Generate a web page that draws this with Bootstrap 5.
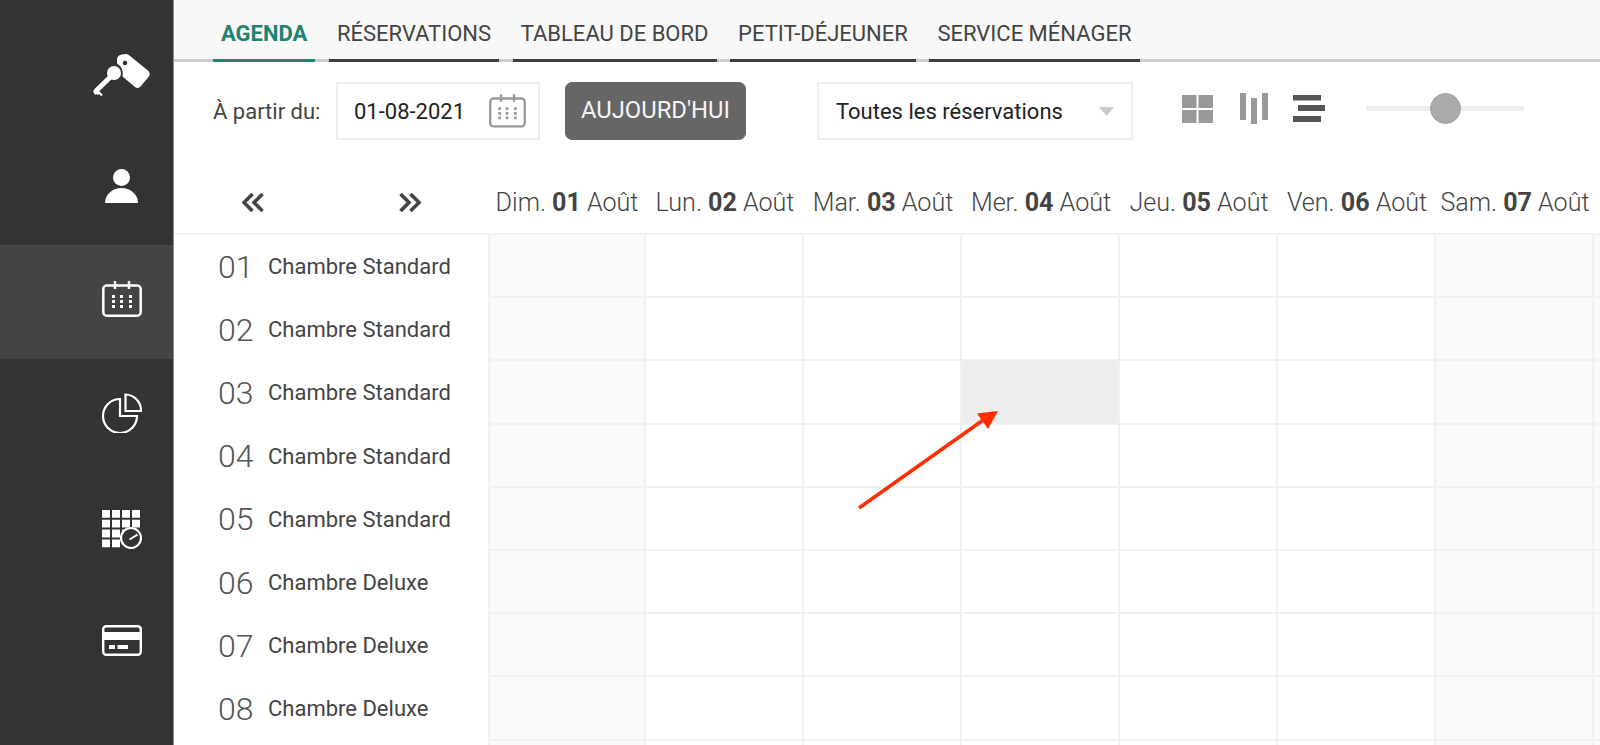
<!DOCTYPE html>
<html lang="fr">
<head>
<meta charset="utf-8">
<title>Agenda</title>
<link rel="stylesheet" href="https://cdn.jsdelivr.net/npm/bootstrap@5.3.0/dist/css/bootstrap.min.css">
<style>
html,body{height:745px;overflow:hidden}
body{font-family:Roboto,"Liberation Sans",sans-serif;color:#444;background:#fff}
.side-rail{width:174px;flex:none;background:#333;border-right:1px solid #8c8c8c;padding-top:17px;height:745px}
.rail-item{height:114px;padding-left:70px;color:#fff}
.rail-item.is-on{background:#444}
.rail-key svg{margin-top:2px}
.rail-user svg{margin-bottom:4px}
.rail-cal svg{margin-bottom:6px}
.rail-pie svg{margin-bottom:6px}
.rail-plan svg{margin-bottom:2px}
.rail-card svg{margin-bottom:8px}
.work-area{flex:1;min-width:0;height:745px;overflow:hidden;position:relative}
.tab-strip{height:62px;background:#f8f8f8;border-bottom:3px solid #ccc;padding-left:39px;gap:13.600px}
.tab-strip .tab-link{height:62px;margin-bottom:-3px;padding:0 8px;font-size:22px;line-height:68px;color:#444;border-bottom:3px solid #3c3c3c;text-decoration:none;white-space:nowrap}
.tab-strip .tab-link.is-on{color:#218270;border-bottom-color:#218270;font-weight:700}
.tool-row{padding:20px 0 0 39px;height:78px}
.from-label{font-size:22px;width:123px;font-weight:400;color:#444}
.date-box{width:204px;height:58px;border:2px solid #eee;padding:0 12px 0 16px;margin-right:25px}
.date-box input{border:0;padding:0;font:400 22px Roboto,sans-serif;color:#222;background:none;box-shadow:none}
.date-glyph{color:#999}
.today-btn.btn{width:181px;height:58px;background:#666;border:1px solid #666;color:#f4f4f4;font-size:23.800px;border-radius:7px;padding:0;margin-right:71px}
.kind-select.form-select{width:316px;height:58px;border:2px solid #eee;border-radius:0;padding:0 40px 0 17px;font-size:22px;color:#222;background-image:url("data:image/svg+xml,%3Csvg xmlns='http://www.w3.org/2000/svg' viewBox='0 0 15 9'%3E%3Cpath d='M0 0h15L7.500 9z' fill='%23ccc'/%3E%3C/svg%3E");background-size:15px 9px;background-position:right 17px center}
.view-icons{margin-left:49px;gap:27px;margin-top:10px}
.view-rows{margin-left:-2px}
.zoom-range.form-range{width:158px;height:32px;margin-left:41px;margin-top:10px}
.zoom-range.form-range::-webkit-slider-runnable-track{height:5px;background:#eee;border-radius:0}
.zoom-range.form-range::-webkit-slider-thumb{width:31px;height:31px;margin-top:-13px;background:#aaa;border-radius:50%;border:1px solid #a2a2a2;box-shadow:none}
.head-row{height:95px;padding-top:45px;border-bottom:2px solid #f1f1f1}
.nav-arrows{width:314px;flex:none;padding-left:68px;gap:135px;padding-top:8px;height:40px}
.day-head{width:158px;flex:none;text-align:center;font-weight:300;font-size:25.100px;white-space:nowrap;line-height:36px;color:#444}
.day-head b{font-weight:700}
.room-row{height:63.200px;flex:none}
.room-id{width:314px;flex:none;padding-left:44px}
.room-no{width:50px;font-size:32px;font-weight:300;line-height:1;color:#555}
.room-name{font-size:22px}
.slot{width:158px;flex:none;border-right:2px solid #f1f1f1;border-bottom:2px solid #f1f1f1}
.slot.first{box-shadow:inset 2px 0 0 #f1f1f1}
.slot.off{background:#fafafa}
.slot.picked{background:#eee}
.pointer-mark{position:absolute;left:0;top:0;pointer-events:none}
</style>
</head>
<body>
<svg width="0" height="0" class="position-absolute">
  <symbol id="cal" viewBox="0 0 40 36">
    <rect x="1.300" y="4.500" width="37.400" height="30.200" rx="3.500" fill="none" stroke="currentColor" stroke-width="2.500"/>
    <path d="M13 0v8M27 0v8" stroke="currentColor" stroke-width="2.500"/>
    <path d="M10 14h3v3h-3zM18 14h3v3h-3zM27 14h3v3h-3zM10 19h3v3h-3zM18 19h3v3h-3zM27 19h3v3h-3zM10 24h3v3h-3zM18 24h3v3h-3zM27 24h3v3h-3z" fill="currentColor"/>
  </symbol>
</svg>
<div class="d-flex">
  <nav class="side-rail d-flex flex-column">
    <a class="rail-item rail-key d-flex align-items-center justify-content-center" href="#" aria-label="Clés">
      <svg width="57" height="42" viewBox="0 0 57 42"><path d="M24 4.500Q25 1 29 .5L33 0Q35 0 37 2L55.500 17Q58 20 55.500 23L47.500 32.500Q45 35 42 33L29.500 22.500Q31 14 24 9.500Z" fill="#fff"/><circle cx="32" cy="9" r="2.300" fill="#333"/><circle cx="21" cy="19" r="7" fill="#fff"/><path d="M21 19.500L3 37" stroke="#fff" stroke-width="5"/><path d="M0 37l3-3 7 7-2 1-2-2-1 1-2-1-1 1z" fill="#fff"/></svg>
    </a>
    <a class="rail-item rail-user d-flex align-items-center justify-content-center" href="#" aria-label="Clients">
      <svg width="33" height="34" viewBox="0 0 33 34"><circle cx="16.500" cy="8.500" r="8.500" fill="#fff"/><path d="M0 34C0 25 8 19 16.500 19S33 25 33 34Z" fill="#fff"/></svg>
    </a>
    <a class="rail-item rail-cal is-on d-flex align-items-center justify-content-center" href="#" aria-label="Agenda">
      <svg width="40" height="36"><use href="#cal"/></svg>
    </a>
    <a class="rail-item rail-pie d-flex align-items-center justify-content-center" href="#" aria-label="Statistiques">
      <svg width="40" height="40" viewBox="0 0 40 40" fill="none" stroke="#fff" stroke-width="2.200"><path d="M18 6V23H35A17 17 0 1 1 18 6Z"/><path d="M23.500 1.500V18H39A16 16 0 0 0 23.500 1.500Z"/></svg>
    </a>
    <a class="rail-item rail-plan d-flex align-items-center justify-content-center" href="#" aria-label="Planning">
      <svg width="40" height="39" viewBox="0 0 40 39"><path d="M0 0h8v7.800H0zM10 0h8v7.800h-8zM20 0h8v7.800h-8zM30 0h8v7.800h-8zM0 9.800h8v7.800H0zM10 9.800h8v7.800h-8zM20 9.800h8v7.800h-8zM30 9.800h8v7.800h-8zM0 19.600h8v7.800H0zM10 19.600h8v7.800h-8zM20 19.600h8v7.800h-8zM0 29.400h8v7.800H0zM10 29.400h8v7.800h-8z" fill="#fff"/><circle cx="29" cy="28" r="10" fill="#333" stroke="#fff" stroke-width="2.200"/><path d="M27.500 29.500L35.500 24.700" stroke="#fff" stroke-width="2"/></svg>
    </a>
    <a class="rail-item rail-card d-flex align-items-center justify-content-center" href="#" aria-label="Paiements">
      <svg width="40" height="31" viewBox="0 0 40 31"><rect x="1.200" y="1.200" width="37.600" height="28.600" rx="3" fill="none" stroke="#fff" stroke-width="2.400"/><path d="M1 7h38v8H1zM7 20h6v4H7zM15.500 20H26v4H15.500z" fill="#fff"/></svg>
    </a>
  </nav>
  <main class="work-area">
    <div class="tab-strip nav flex-nowrap">
      <a class="tab-link is-on" href="#">AGENDA</a>
      <a class="tab-link" href="#">RÉSERVATIONS</a>
      <a class="tab-link" href="#">TABLEAU DE BORD</a>
      <a class="tab-link" href="#">PETIT-DÉJEUNER</a>
      <a class="tab-link" href="#">SERVICE MÉNAGER</a>
    </div>
    <div class="tool-row d-flex align-items-start">
      <label class="from-label d-flex align-items-center h-100" for="dateFrom">À partir du:</label>
      <div class="date-box d-flex align-items-center">
        <input id="dateFrom" class="form-control" value="01-08-2021">
        <svg class="date-glyph flex-shrink-0" width="37" height="36"><use href="#cal"/></svg>
      </div>
      <button class="btn today-btn" type="button">AUJOURD'HUI</button>
      <select class="form-select kind-select" aria-label="Filtre"><option>Toutes les réservations</option></select>
      <div class="view-icons d-flex align-items-center">
        <svg width="31" height="33" viewBox="0 0 31 33"><path d="M0 3h14.500v13H0zM16.500 3H31v13H16.500zM0 18h14.500v13H0zM16.500 18H31v13H16.500z" fill="#999"/></svg>
        <svg width="28" height="33" viewBox="0 0 28 33"><path d="M0 1h6v27H0zM11 6h6v26h-6zM22 1h6v27h-6z" fill="#999"/></svg>
        <svg class="view-rows" width="32" height="33" viewBox="0 0 32 33"><path d="M0 3h28v5.500H0zM5 13h27v6H5zM0 24h28v6H0z" fill="#555"/></svg>
      </div>
      <input class="form-range zoom-range" type="range" value="50" aria-label="Zoom">
    </div>
    <div class="head-row d-flex">
      <div class="nav-arrows d-flex">
        <svg width="22" height="19" viewBox="0 0 22 19" fill="none" stroke="#444" stroke-width="3.600"><path d="M10.500 1L2 9.500l8.500 8.500M20.500 1L12 9.500l8.500 8.500"/></svg>
        <svg width="22" height="19" viewBox="0 0 22 19" fill="none" stroke="#444" stroke-width="3.600"><path d="M1.500 1L10 9.500 1.500 18M11.500 1L20 9.500 11.500 18"/></svg>
      </div>
      <div class="day-head">Dim. <b>01</b> Août</div>
      <div class="day-head">Lun. <b>02</b> Août</div>
      <div class="day-head">Mar. <b>03</b> Août</div>
      <div class="day-head">Mer. <b>04</b> Août</div>
      <div class="day-head">Jeu. <b>05</b> Août</div>
      <div class="day-head">Ven. <b>06</b> Août</div>
      <div class="day-head">Sam. <b>07</b> Août</div>
    </div>
    <div class="room-row d-flex"><div class="room-id d-flex align-items-center"><span class="room-no">01</span><span class="room-name">Chambre Standard</span></div><div class="slot first off"></div><div class="slot"></div><div class="slot"></div><div class="slot"></div><div class="slot"></div><div class="slot"></div><div class="slot off"></div><div class="slot off"></div></div>
    <div class="room-row d-flex"><div class="room-id d-flex align-items-center"><span class="room-no">02</span><span class="room-name">Chambre Standard</span></div><div class="slot first off"></div><div class="slot"></div><div class="slot"></div><div class="slot"></div><div class="slot"></div><div class="slot"></div><div class="slot off"></div><div class="slot off"></div></div>
    <div class="room-row d-flex"><div class="room-id d-flex align-items-center"><span class="room-no">03</span><span class="room-name">Chambre Standard</span></div><div class="slot first off"></div><div class="slot"></div><div class="slot"></div><div class="slot picked"></div><div class="slot"></div><div class="slot"></div><div class="slot off"></div><div class="slot off"></div></div>
    <div class="room-row d-flex"><div class="room-id d-flex align-items-center"><span class="room-no">04</span><span class="room-name">Chambre Standard</span></div><div class="slot first off"></div><div class="slot"></div><div class="slot"></div><div class="slot"></div><div class="slot"></div><div class="slot"></div><div class="slot off"></div><div class="slot off"></div></div>
    <div class="room-row d-flex"><div class="room-id d-flex align-items-center"><span class="room-no">05</span><span class="room-name">Chambre Standard</span></div><div class="slot first off"></div><div class="slot"></div><div class="slot"></div><div class="slot"></div><div class="slot"></div><div class="slot"></div><div class="slot off"></div><div class="slot off"></div></div>
    <div class="room-row d-flex"><div class="room-id d-flex align-items-center"><span class="room-no">06</span><span class="room-name">Chambre Deluxe</span></div><div class="slot first off"></div><div class="slot"></div><div class="slot"></div><div class="slot"></div><div class="slot"></div><div class="slot"></div><div class="slot off"></div><div class="slot off"></div></div>
    <div class="room-row d-flex"><div class="room-id d-flex align-items-center"><span class="room-no">07</span><span class="room-name">Chambre Deluxe</span></div><div class="slot first off"></div><div class="slot"></div><div class="slot"></div><div class="slot"></div><div class="slot"></div><div class="slot"></div><div class="slot off"></div><div class="slot off"></div></div>
    <div class="room-row d-flex"><div class="room-id d-flex align-items-center"><span class="room-no">08</span><span class="room-name">Chambre Deluxe</span></div><div class="slot first off"></div><div class="slot"></div><div class="slot"></div><div class="slot"></div><div class="slot"></div><div class="slot"></div><div class="slot off"></div><div class="slot off"></div></div>
    <div class="room-row d-flex"><div class="room-id d-flex align-items-center"></div><div class="slot first off"></div><div class="slot"></div><div class="slot"></div><div class="slot"></div><div class="slot"></div><div class="slot"></div><div class="slot off"></div><div class="slot off"></div></div>
    <svg class="pointer-mark" width="1426" height="745" viewBox="174 0 1426 745"><path d="M859 508L986 418" stroke="#ff2d00" stroke-width="3.500"/><path d="M998 411L977 413.500L988 429Z" fill="#ff2d00"/></svg>
  </main>
</div>
</body>
</html>
